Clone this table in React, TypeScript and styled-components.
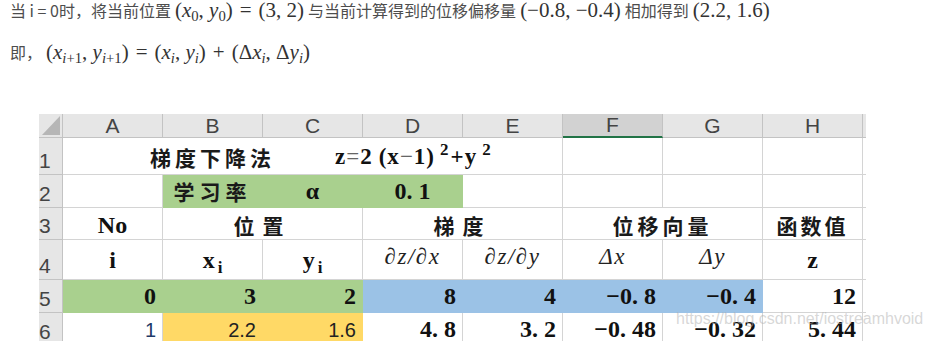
import React from 'react';
import styled, { createGlobalStyle } from 'styled-components';

type Fill = 'none' | 'green' | 'blue' | 'yellow';
type Align = 'left' | 'center' | 'right';

const fills: Record<Fill, string> = {
  none: '#ffffff',
  green: '#a9d08e',
  blue: '#9bc2e6',
  yellow: '#ffd966',
};

const GRID = '#d4d4d4';
const HEAD_BG = '#e6e6e6';
const HEAD_LINE = '#c3c3c3';

const justify: Record<Align, string> = {
  left: 'flex-start',
  center: 'center',
  right: 'flex-end',
};

const GlobalStyle = createGlobalStyle`
  html, body {
    margin: 0;
    padding: 0;
    background: #fff;
  }
  body {
    overflow: hidden;
  }
`;

const Page = styled.div`
  position: relative;
  width: 929px;
  height: 341px;
  overflow: hidden;
  font-family: 'Noto Sans CJK SC', 'Liberation Sans', sans-serif;
`;

const Para = styled.p<{ $gap: number }>`
  margin: ${({ $gap }) => $gap}px 0 0;
  padding-left: 10px;
  font-size: 16px;
  line-height: 20px;
  color: #4d4d4d;
  white-space: nowrap;
`;

const Math = styled.span`
  font-family: 'Liberation Serif', 'DejaVu Serif', serif;
  font-size: 21px;
  line-height: 20px;
  color: #333;
  margin: 0 4px;
`;

const Var = styled.i`
  font-style: italic;
`;

const Sub = styled.sub`
  font-size: 0.7em;
  line-height: 0;
  vertical-align: -0.25em;
  font-style: normal;
`;

const Op = styled.span`
  margin: 0 7px;
`;

const Sheet = styled.div`
  margin: 52px 0 0 39px;
  display: grid;
  grid-template-columns: 24px repeat(8, 100px) 3px;
  grid-template-rows: 24px 37px 33px 32px 40px 33px 33px;
`;

const Corner = styled.div`
  position: relative;
  background: ${HEAD_BG};
  border-right: 1px solid ${HEAD_LINE};
  border-bottom: 1px solid ${HEAD_LINE};
  box-sizing: border-box;

  &::after {
    content: '';
    position: absolute;
    right: 2px;
    bottom: 2px;
    width: 18px;
    height: 19px;
    background: #b6b6b6;
    clip-path: polygon(100% 0, 100% 100%, 0 100%);
  }
`;

const ColHead = styled.div<{ $active?: boolean }>`
  box-sizing: border-box;
  display: flex;
  align-items: center;
  justify-content: center;
  background: ${({ $active }) => ($active ? '#d2d2d2' : HEAD_BG)};
  border-right: 1px solid ${HEAD_LINE};
  border-bottom: ${({ $active }) => ($active ? '2px solid #217346' : `1px solid ${HEAD_LINE}`)};
  font-family: 'Liberation Sans', Arial, sans-serif;
  font-size: 21px;
  line-height: 24px;
  color: #444;
`;

const RowHead = styled.div`
  box-sizing: border-box;
  display: flex;
  align-items: flex-end;
  overflow: hidden;
  background: ${HEAD_BG};
  border-right: 1px solid ${HEAD_LINE};
  border-bottom: 1px solid ${HEAD_LINE};
  padding: 0 0 1px 1px;
  text-indent: -1px;
  font-family: 'Liberation Sans', Arial, sans-serif;
  font-size: 21px;
  line-height: 24px;
  color: #444;
`;

const Cell = styled.div<{ $span?: number; $fill?: Fill; $align?: Align; $pb?: number; $pl?: number }>`
  grid-column: span ${({ $span }) => $span ?? 1};
  box-sizing: border-box;
  display: flex;
  align-items: flex-end;
  justify-content: ${({ $align }) => justify[$align ?? 'center']};
  padding: 0 6px ${({ $pb }) => $pb ?? 3}px ${({ $pl }) => $pl ?? 6}px;
  background: ${({ $fill }) => fills[$fill ?? 'none']};
  border-right: 1px solid ${({ $fill }) => ($fill && $fill !== 'none' ? fills[$fill] : GRID)};
  border-bottom: 1px solid ${({ $fill }) => ($fill && $fill !== 'none' ? fills[$fill] : GRID)};
  color: #111;
  white-space: nowrap;
`;

const Edge = styled.div`
  border-bottom: 1px solid ${GRID};
`;

const EdgeHead = styled.div`
  background: ${HEAD_BG};
  border-bottom: 1px solid ${HEAD_LINE};
`;

const Title = styled.span<{ $spacing?: number }>`
  font-family: 'Noto Sans CJK SC', sans-serif;
  font-weight: 700;
  font-size: 21px;
  line-height: 26px;
  letter-spacing: ${({ $spacing }) => $spacing ?? 4}px;
  color: #1a1a1a;
`;

const Formula = styled.span`
  margin-left: 60px;
  font-family: 'Liberation Serif', serif;
  font-weight: 700;
  font-size: 23px;
  line-height: 26px;
  letter-spacing: 1px;
  color: #111;
`;

const Eq = styled.span`
  font-weight: 400;
  color: #666;
`;

const Gap = styled.span`
  display: inline-block;
  width: 6px;
`;

const Sup = styled.sup`
  font-size: 17px;
  line-height: 0;
  vertical-align: 9px;
  margin: 0 1px 0 5px;
`;

const Num = styled.span`
  font-family: 'Liberation Serif', serif;
  font-weight: 700;
  font-size: 24px;
  line-height: 26px;
  color: #111;
`;

const Plain = styled.span<{ $blue?: boolean }>`
  font-family: 'Liberation Sans', Arial, sans-serif;
  font-size: 20px;
  line-height: 24px;
  color: ${({ $blue }) => ($blue ? '#1f3a68' : '#222')};
`;

const Sym = styled.span`
  font-family: 'Liberation Serif', serif;
  font-style: italic;
  font-size: 23px;
  line-height: 28px;
  letter-spacing: 1.5px;
  color: #222;
`;

const BoldSub = styled.sub`
  font-size: 17px;
  line-height: 0;
  vertical-align: -5px;
  margin-left: 3px;
`;

const Watermark = styled.div`
  position: absolute;
  left: 676px;
  top: 310px;
  font-family: 'Liberation Sans', Arial, sans-serif;
  font-size: 16px;
  color: rgba(175, 175, 175, 0.5);
  pointer-events: none;
`;

const columns = ['A', 'B', 'C', 'D', 'E', 'F', 'G', 'H'];

const App: React.FC = () => {
  return (
    <Page>
      <GlobalStyle />
      <Para $gap={0}>
        当 i = 0时，将当前位置
        <Math>
          (<Var>x</Var>
          <Sub>0</Sub>, <Var>y</Var>
          <Sub>0</Sub>)<Op>=</Op>(3, 2)
        </Math>
        与当前计算得到的位移偏移量
        <Math>(−0.8, −0.4)</Math>
        相加得到
        <Math>(2.2, 1.6)</Math>
      </Para>
      <Para $gap={22}>
        即，
        <Math>
          (<Var>x</Var>
          <Sub>
            <Var>i</Var>+1
          </Sub>
          , <Var>y</Var>
          <Sub>
            <Var>i</Var>+1
          </Sub>
          )<Op>=</Op>(<Var>x</Var>
          <Sub>
            <Var>i</Var>
          </Sub>
          , <Var>y</Var>
          <Sub>
            <Var>i</Var>
          </Sub>
          )<Op>+</Op>(Δ<Var>x</Var>
          <Sub>
            <Var>i</Var>
          </Sub>
          , Δ<Var>y</Var>
          <Sub>
            <Var>i</Var>
          </Sub>
          )
        </Math>
      </Para>

      <Sheet>
        <Corner />
        {columns.map((c) => (
          <ColHead key={c} $active={c === 'F'}>
            {c}
          </ColHead>
        ))}
        <EdgeHead />

        <RowHead>1</RowHead>
        <Cell $span={5} $pb={4} $align="left" $pl={87}>
          <Title>梯度下降法</Title>
          <Formula>
            z<Eq>=</Eq>2<Gap />(x<Eq>−</Eq>1)<Sup>2</Sup>+y<Sup>2</Sup>
          </Formula>
        </Cell>
        <Cell />
        <Cell />
        <Cell />
        <Edge />

        <RowHead>2</RowHead>
        <Cell />
        <Cell $fill="green">
          <Title $spacing={5}>学习率</Title>
        </Cell>
        <Cell $fill="green">
          <Num>α</Num>
        </Cell>
        <Cell $fill="green">
          <Num>0. 1</Num>
        </Cell>
        <Cell />
        <Cell />
        <Cell />
        <Cell />
        <Edge />

        <RowHead>3</RowHead>
        <Cell $pb={1}>
          <Num>No</Num>
        </Cell>
        <Cell $span={2} $pb={1}>
          <Title $spacing={8}>位置</Title>
        </Cell>
        <Cell $span={2} $pb={1}>
          <Title $spacing={8}>梯度</Title>
        </Cell>
        <Cell $span={2} $pb={1}>
          <Title $spacing={4}>位移向量</Title>
        </Cell>
        <Cell $pb={1}>
          <Title $spacing={3}>函数值</Title>
        </Cell>
        <Edge />

        <RowHead>4</RowHead>
        <Cell $pb={6}>
          <Num>i</Num>
        </Cell>
        <Cell $pb={6}>
          <Num>
            x<BoldSub>i</BoldSub>
          </Num>
        </Cell>
        <Cell $pb={6}>
          <Num>
            y<BoldSub>i</BoldSub>
          </Num>
        </Cell>
        <Cell $pb={8}>
          <Sym>∂z/∂x</Sym>
        </Cell>
        <Cell $pb={8}>
          <Sym>∂z/∂y</Sym>
        </Cell>
        <Cell $pb={8}>
          <Sym>Δx</Sym>
        </Cell>
        <Cell $pb={8}>
          <Sym>Δy</Sym>
        </Cell>
        <Cell $pb={6}>
          <Num>z</Num>
        </Cell>
        <Edge />

        <RowHead>5</RowHead>
        <Cell $fill="green" $align="right">
          <Num>0</Num>
        </Cell>
        <Cell $fill="green" $align="right">
          <Num>3</Num>
        </Cell>
        <Cell $fill="green" $align="right">
          <Num>2</Num>
        </Cell>
        <Cell $fill="blue" $align="right">
          <Num>8</Num>
        </Cell>
        <Cell $fill="blue" $align="right">
          <Num>4</Num>
        </Cell>
        <Cell $fill="blue" $align="right">
          <Num>−0. 8</Num>
        </Cell>
        <Cell $fill="blue" $align="right">
          <Num>−0. 4</Num>
        </Cell>
        <Cell $align="right">
          <Num>12</Num>
        </Cell>
        <Edge />

        <RowHead>6</RowHead>
        <Cell $align="right">
          <Plain $blue>1</Plain>
        </Cell>
        <Cell $fill="yellow" $align="right">
          <Plain>2.2</Plain>
        </Cell>
        <Cell $fill="yellow" $align="right">
          <Plain>1.6</Plain>
        </Cell>
        <Cell $align="right">
          <Num>4. 8</Num>
        </Cell>
        <Cell $align="right">
          <Num>3. 2</Num>
        </Cell>
        <Cell $align="right">
          <Num>−0. 48</Num>
        </Cell>
        <Cell $align="right">
          <Num>−0. 32</Num>
        </Cell>
        <Cell $align="right">
          <Num>5. 44</Num>
        </Cell>
        <Edge />
      </Sheet>

      <Watermark>https://blog.csdn.net/iostreamhvoid</Watermark>
    </Page>
  );
};

export default App;
